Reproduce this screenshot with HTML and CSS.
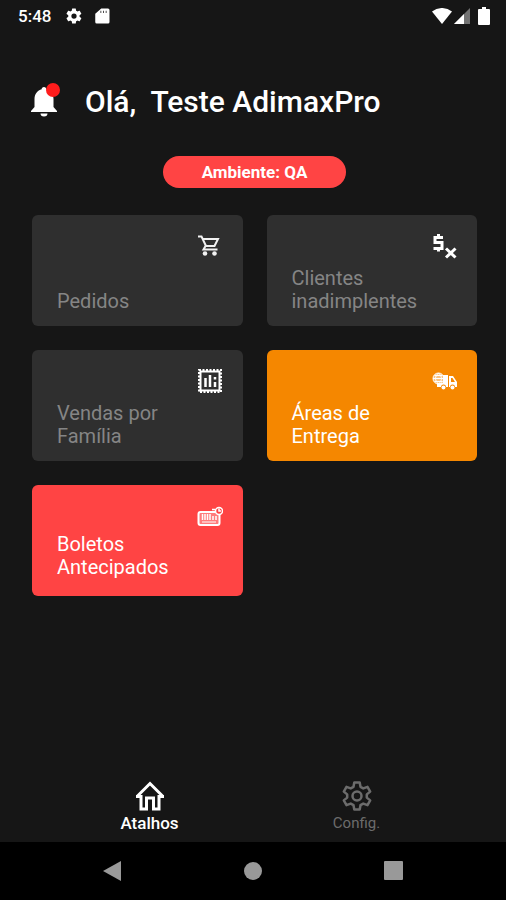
FILE: index.html
```
<!DOCTYPE html>
<html lang="pt-BR">
<head>
    <meta charset="UTF-8">
    <meta name="viewport" content="width=device-width, initial-scale=1.0">
    <title>AdimaxPro</title>
    <link rel="stylesheet" href="styles.css">
</head>
<body>

<div class="status-bar">
    <span class="clock">5:48</span>
    <svg class="status-icon" viewBox="0 0 24 24"><path fill-rule="evenodd" d="M19.4 13a7.800 7.800 0 0 0 0-2l2.200-1.700a.5.5 0 0 0 .1-.6l-2.100-3.600a.5.5 0 0 0-.6-.2l-2.500 1a7.300 7.300 0 0 0-1.700-1l-.4-2.600a.5.5 0 0 0-.5-.4h-4a.5.5 0 0 0-.5.4L9 4.900a7.300 7.300 0 0 0-1.700 1l-2.500-1a.5.5 0 0 0-.6.2L2.100 8.700a.5.5 0 0 0 .1.600L4.400 11a7.800 7.800 0 0 0 0 2l-2.200 1.700a.5.5 0 0 0-.1.600l2.100 3.600c.1.200.4.300.6.200l2.500-1a7.300 7.300 0 0 0 1.700 1l.4 2.600c0 .2.200.4.500.4h4c.3 0 .5-.2.500-.4l.4-2.600a7.300 7.300 0 0 0 1.700-1l2.500 1c.2.100.5 0 .6-.2l2.100-3.600a.5.5 0 0 0-.1-.6zM12 15.500a3.500 3.500 0 1 1 0-7 3.500 3.500 0 0 1 0 7z"/></svg>
    <svg class="status-icon" viewBox="0 0 24 24"><path fill-rule="evenodd" d="M20 2h-9L3 9v11a2 2 0 0 0 2 2h15a2 2 0 0 0 2-2V4a2 2 0 0 0-2-2zM10 5h1v3h-1zM13.500 5h1v3h-1zM17 5h1v3h-1z"/></svg>
    <div class="signals">
        <svg width="20" height="16" viewBox="0 0 20 16"><path d="M0 3.500a16 16 0 0 1 20 0L10 16z"/></svg>
        <svg width="16" height="16" viewBox="0 0 16 16"><path d="M16 0v16H0z" opacity=".4"/><path d="M10 6v10H0z"/></svg>
        <svg class="battery" width="12" height="18" viewBox="0 0 12 18"><path d="M4 0h4v2h3a1 1 0 0 1 1 1v14a1 1 0 0 1-1 1H1a1 1 0 0 1-1-1V3a1 1 0 0 1 1-1h3z"/></svg>
    </div>
</div>

<main>
    <header class="greeting">
        <button class="bell" aria-label="Notificações">
            <svg width="28" height="32" viewBox="0 0 28 32"><path d="M14 2c-1.500 0-2.300 1-2.300 2.200C7.500 5.300 4.500 9 4.500 14v8L1 26v1h26v-1l-3.500-4v-8c0-5-3-8.700-7.200-9.800C16.300 3 15.500 2 14 2zM10.500 28.500a3.500 3 0 0 0 7 0z"/></svg>
            <span class="dot"></span>
        </button>
        <h1>Olá,&nbsp; Teste AdimaxPro</h1>
    </header>

    <div class="environment">Ambiente: QA</div>

    <div class="cards">
        <button class="card">
            <svg class="card-icon" viewBox="0 0 26 26"><g fill="none" stroke="#f2f2f2" stroke-width="2"><path d="M1 3.500h3.500L9 13h8.500l3.500-7H5.500"/><path d="M8.500 13l-2 3.500h14"/></g><circle cx="8" cy="20.500" r="2.300" fill="#f2f2f2"/><circle cx="17.500" cy="20.500" r="2.300" fill="#f2f2f2"/></svg>
            <span>Pedidos</span>
        </button>
        <button class="card">
            <svg class="card-icon" viewBox="0 0 26 26"><g fill="none" stroke="#fff" stroke-width="3"><path d="M12 4.500H4v5h7v6H2.500M7.500 1v4M7.500 15v3.500"/><path d="M15 15.500l9.500 9M24.500 15.500l-9.500 9"/></g></svg>
            <span>Clientes<br>inadimplentes</span>
        </button>
        <button class="card">
            <svg class="card-icon" viewBox="0 0 26 26"><g fill="none" stroke="#fff"><path d="M3.500 3.500h19v19h-19z" stroke-width="2"/><path d="M2 2h22v22H2z" stroke-width="2" stroke-dasharray="2 1.500"/><path d="M8.500 10v9M13 7v12M18 14v5M18 9v2.500" stroke-width="2.500"/></g></svg>
            <span>Vendas por<br>Família</span>
        </button>
        <button class="card card-orange">
            <svg class="card-icon" viewBox="0 0 26 26"><path fill="#fff" fill-rule="evenodd" d="M12 7h5v12h-2a2.500 2.500 0 0 0-5 0H6v-4h6zM18 8h4l4 6v5h-2a2.500 2.500 0 0 0-5 0h-1zM20 10v4h4l-2.500-4z"/><circle cx="12.500" cy="19.500" r="2" fill="#fff"/><circle cx="21.500" cy="19.500" r="2" fill="#fff"/><g fill="#fff" fill-opacity=".5" stroke="#fff"><circle cx="7.500" cy="10.500" r="5.500"/><path fill="none" d="M2 10.500h11M3.500 7.500h8M3.500 13.500h8M7.500 5c-4 4-4 7 0 11M7.500 5c4 4 4 7 0 11"/></g></svg>
            <span>Áreas de<br>Entrega</span>
        </button>
        <button class="card card-red">
            <svg class="card-icon" viewBox="0 0 26 26"><g fill="none" stroke="#fff"><rect x="1.500" y="9" width="21" height="13" rx="2" stroke-width="2" fill="#fff" fill-opacity=".3"/><path d="M5.500 11v6M8 11v6M10.500 11v6M13 11v6M16 13v4M19 13v4" stroke-width="1.500"/><path d="M5 19h14" stroke-width="1"/><circle cx="22" cy="8" r="3.500" stroke-width="1.500" fill="#ff4444"/><path d="M22 5.500V8h2M15 6.500h3" stroke-width="1.500"/></g></svg>
            <span>Boletos<br>Antecipados</span>
        </button>
    </div>
</main>

<nav class="tabs">
    <a href="#atalhos" class="tab active">
        <svg width="32" height="32" viewBox="0 0 32 32"><path fill="none" stroke="currentColor" stroke-width="3" d="M2 16.500h5V29h5.500V18h7v11H25V16.500h5M3.500 16L16 3.500 28.500 16"/></svg>
        <span>Atalhos</span>
    </a>
    <a href="#config" class="tab">
        <svg width="32" height="32" viewBox="0 0 32 32"><g fill="none" stroke="currentColor" stroke-width="2.500" stroke-linejoin="round"><path d="M13.300 2.500h5.400l.8 4.300 2.800 1.600 4.200-1.500 2.700 4.700-3.400 2.800v3.200l3.400 2.800-2.700 4.700-4.200-1.500-2.800 1.600-.8 4.300h-5.400l-.8-4.300-2.800-1.600-4.200 1.500-2.700-4.700 3.400-2.800v-3.200l-3.400-2.800 2.700-4.700 4.200 1.500 2.800-1.600z"/><circle cx="16" cy="16" r="4.500"/></g></svg>
        <span>Config.</span>
    </a>
</nav>

<div class="system-nav">
    <button aria-label="Voltar"><svg width="20" height="20" viewBox="0 0 20 20"><path d="M19 0v20L1 10z"/></svg></button>
    <button aria-label="Início"><svg width="20" height="20" viewBox="0 0 20 20"><circle cx="10" cy="10" r="9"/></svg></button>
    <button aria-label="Recentes"><svg width="20" height="20" viewBox="0 0 20 20"><rect width="19" height="19" rx="1"/></svg></button>
</div>

</body>
</html>
```
FILE: styles.css
```
* {
    box-sizing: border-box;
}
body {
    font-family: Roboto, sans-serif;
    background-color: #161616;
    color: white;
    display: flex;
    flex-direction: column;
    min-height: 100vh;
    margin: 0;
}
button {
    font-family: inherit;
    color: inherit;
    background: none;
    border: none;
    padding: 0;
    cursor: pointer;
}
svg {
    display: block;
    fill: currentColor;
}
.status-bar {
    display: flex;
    align-items: center;
    gap: 10px;
    height: 32px;
    padding: 0 16px 0 18px;
}
.clock {
    font-size: 17px;
    font-weight: 500;
    margin-right: 4px;
}
.status-icon {
    width: 18px;
    height: 18px;
}
.signals {
    display: flex;
    align-items: center;
    gap: 2px;
    margin-left: auto;
}
.battery {
    margin-left: 6px;
}
main {
    flex: 1;
    padding: 48px 29px 0 32px;
}
.greeting {
    display: flex;
    align-items: center;
    gap: 27px;
    height: 42px;
}
.bell {
    position: relative;
    margin-left: -2px;
}
.dot {
    position: absolute;
    top: -2px;
    right: -2px;
    width: 14px;
    height: 14px;
    border-radius: 50%;
    background: #ff1c1c;
}
h1 {
    font-size: 30px;
    font-weight: 500;
    margin: 0;
}
.environment {
    width: 183px;
    margin: 34px auto 27px;
    border-radius: 16px;
    background: #ff4444;
    font-size: 17px;
    font-weight: 700;
    line-height: 32px;
    text-align: center;
}
.cards {
    display: grid;
    grid-template-columns: 1fr 1fr;
    gap: 24px;
}
.card {
    display: flex;
    flex-direction: column;
    justify-content: space-between;
    min-height: 111px;
    padding: 18px 20px 13px 25px;
    border-radius: 6px;
    background: #2f2f2f;
    color: #858585;
    font-size: 20px;
    line-height: 23px;
    text-align: left;
}
.card-icon {
    width: 26px;
    height: 26px;
    align-self: flex-end;
}
.card-orange {
    background: #f58700;
    color: white;
}
.card-red {
    background: #ff4444;
    color: white;
    padding-bottom: 17px;
}
.tabs {
    display: flex;
    padding: 0 46px 8px;
}
.tab {
    flex: 1;
    display: flex;
    flex-direction: column;
    align-items: center;
    color: #6c6c6c;
    font-size: 15px;
    line-height: 22px;
    text-decoration: none;
}
.tab.active {
    color: white;
    font-size: 17px;
    font-weight: 500;
}
.system-nav {
    display: flex;
    height: 58px;
    padding: 0 42px;
    background: black;
    color: #999;
}
.system-nav button {
    flex: 1;
    display: flex;
    justify-content: center;
    align-items: center;
}
```
